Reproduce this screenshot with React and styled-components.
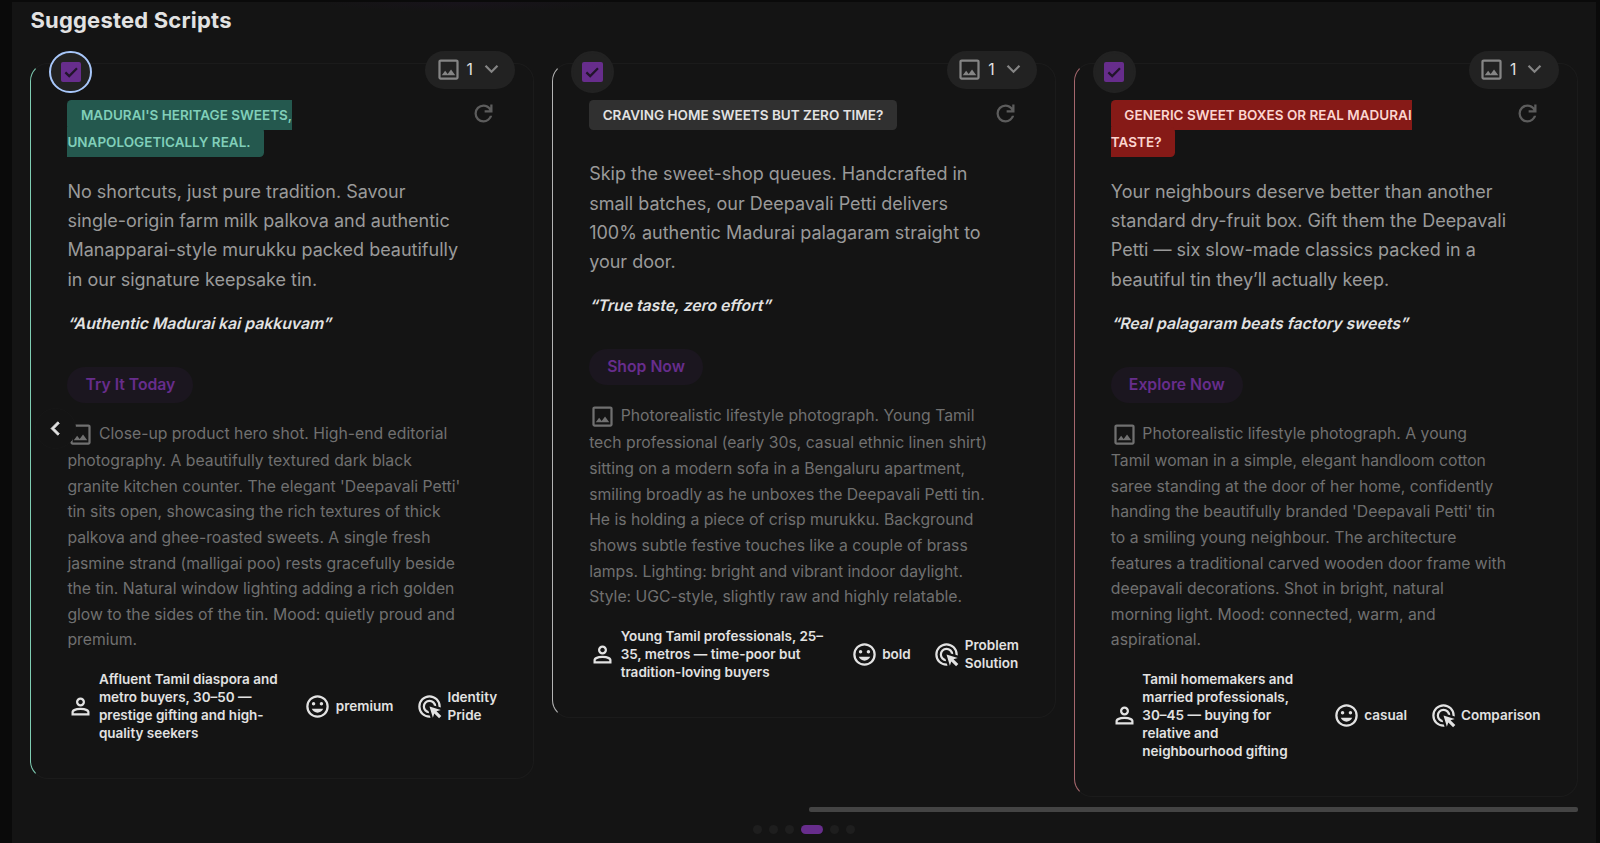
import React, { useState } from "react";
import styled, { createGlobalStyle } from "styled-components";

const icons = {
  image:
    "M200-120q-33 0-56.5-23.5T120-200v-560q0-33 23.5-56.5T200-840h560q33 0 56.5 23.5T840-760v560q0 33-23.5 56.5T760-120H200Zm0-80h560v-560H200v560Zm40-80h480L570-480 450-320l-90-120-120 160Z",
  person:
    "M480-480q-66 0-113-47t-47-113q0-66 47-113t113-47q66 0 113 47t47 113q0 66-47 113t-113 47ZM160-160v-112q0-34 17.5-62.5T224-378q62-31 126-46.5T480-440q66 0 130 15.5T736-378q29 15 46.5 43.5T800-272v112H160Zm80-80h480v-32q0-11-5.5-20T700-306q-54-27-109-40.5T480-360q-56 0-111 13.5T260-306q-9 5-14.5 14t-5.5 20v32Zm240-320q33 0 56.5-23.5T560-640q0-33-23.5-56.5T480-720q-33 0-56.5 23.5T400-640q0 33 23.5 56.5T480-560Z",
  mood:
    "M480-260q68 0 123.5-38.5T684-400H276q25 63 80.5 101.5T480-260Zm140-260q25 0 42.5-17.5T680-580q0-25-17.5-42.5T620-640q-25 0-42.5 17.5T560-580q0 25 17.5 42.5T620-520Zm-280 0q25 0 42.5-17.5T400-580q0-25-17.5-42.5T340-640q-25 0-42.5 17.5T280-580q0 25 17.5 42.5T340-520ZM480-80q-83 0-156-31.5T197-197q-54-54-85.5-127T80-480q0-83 31.5-156T197-763q54-54 127-85.5T480-880q83 0 156 31.5T763-763q54 54 85.5 127T880-480q0 83-31.5 156T763-197q-54 54-127 85.5T480-80Zm0-80q134 0 227-93t93-227q0-134-93-227t-227-93q-134 0-227 93t-93 227q0 134 93 227t227 93Z",
  click:
    "M468-240q-96-5-162-74t-66-166q0-100 70-170t170-70q97 0 166 66t74 162l-84-25q-13-54-56-88.5T480-640q-66 0-113 47t-47 113q0 57 34.5 100t88.5 56l25 84Zm48 158q-9 2-18 2h-18q-83 0-156-31.5T197-197q-54-54-85.5-127T80-480q0-83 31.5-156T197-763q54-54 127-85.5T480-880q83 0 156 31.5T763-763q54 54 85.5 127T880-480v18q0 9-2 18l-78-24v-12q0-134-93-227t-227-93q-134 0-227 93t-93 227q0 134 93 227t227 93h12l24 78Zm305 22L650-231 600-80 480-480l400 120-151 50 171 171-79 79Z",
  refresh:
    "M480-160q-134 0-227-93t-93-227q0-134 93-227t227-93q69 0 132 28.5T720-690v-110h80v280H520v-80h168q-32-56-87.5-88T480-720q-100 0-170 70t-70 170q0 100 70 170t170 70q77 0 139-44t87-116h84q-28 106-114 173t-196 67Z",
  more: "M480-344 240-584l56-56 184 184 184-184 56 56-240 240Z",
  left: "M560-240 320-480l240-240 56 56-184 184 184 184-56 56Z",
};

const scripts = [
  {
    id: 1,
    badge: "MADURAI'S HERITAGE SWEETS, UNAPOLOGETICALLY REAL.",
    line: "#7fcdb3",
    badgeBg: "#24584e",
    badgeText: "#80cfb9",
    body: "No shortcuts, just pure tradition. Savour single-origin farm milk palkova and authentic Manapparai-style murukku packed beautifully in our signature keepsake tin.",
    quote: "“Authentic Madurai kai pakkuvam”",
    cta: "Try It Today",
    visual:
      "Close-up product hero shot. High-end editorial photography. A beautifully textured dark black granite kitchen counter. The elegant 'Deepavali Petti' tin sits open, showcasing the rich textures of thick palkova and ghee-roasted sweets. A single fresh jasmine strand (malligai poo) rests gracefully beside the tin. Natural window lighting adding a rich golden glow to the sides of the tin. Mood: quietly proud and premium.",
    audience:
      "Affluent Tamil diaspora and metro buyers, 30–50 — prestige gifting and high-quality seekers",
    tone: "premium",
    angle: "Identity Pride",
  },
  {
    id: 2,
    badge: "CRAVING HOME SWEETS BUT ZERO TIME?",
    line: "#b4b4b4",
    badgeBg: "#303030",
    badgeText: "#e2e2e2",
    body: "Skip the sweet-shop queues. Handcrafted in small batches, our Deepavali Petti delivers 100% authentic Madurai palagaram straight to your door.",
    quote: "“True taste, zero effort”",
    cta: "Shop Now",
    visual:
      "Photorealistic lifestyle photograph. Young Tamil tech professional (early 30s, casual ethnic linen shirt) sitting on a modern sofa in a Bengaluru apartment, smiling broadly as he unboxes the Deepavali Petti tin. He is holding a piece of crisp murukku. Background shows subtle festive touches like a couple of brass lamps. Lighting: bright and vibrant indoor daylight. Style: UGC-style, slightly raw and highly relatable.",
    audience:
      "Young Tamil professionals, 25–35, metros — time-poor but tradition-loving buyers",
    tone: "bold",
    angle: "Problem Solution",
  },
  {
    id: 3,
    badge: "GENERIC SWEET BOXES OR REAL MADURAI TASTE?",
    line: "#a5676d",
    badgeBg: "#861a17",
    badgeText: "#fbd5d0",
    body: "Your neighbours deserve better than another standard dry-fruit box. Gift them the Deepavali Petti — six slow-made classics packed in a beautiful tin they’ll actually keep.",
    quote: "“Real palagaram beats factory sweets”",
    cta: "Explore Now",
    visual:
      "Photorealistic lifestyle photograph. A young Tamil woman in a simple, elegant handloom cotton saree standing at the door of her home, confidently handing the beautifully branded 'Deepavali Petti' tin to a smiling young neighbour. The architecture features a traditional carved wooden door frame with deepavali decorations. Shot in bright, natural morning light. Mood: connected, warm, and aspirational.",
    audience:
      "Tamil homemakers and married professionals, 30–45 — buying for relative and neighbourhood gifting",
    tone: "casual",
    angle: "Comparison",
  },
];

function Icon({ name }) {
  return (
    <Glyph viewBox="0 -960 960 960">
      <path d={icons[name]} />
    </Glyph>
  );
}

function ScriptCard({ script, focused, checked, onToggle }) {
  return (
    <Card $line={script.line}>
      <CheckCircle $focused={focused} onClick={onToggle}>
        <CheckBox $checked={checked}>
          <svg viewBox="0 0 18 18" fill="none">
            <path
              d="M3.9 9.2 7.3 12.5 14.2 5.6"
              stroke="#21152a"
              strokeWidth="2"
            />
          </svg>
        </CheckBox>
      </CheckCircle>
      <CountPill>
        <Icon name="image" />
        <span>1</span>
        <Icon name="more" />
      </CountPill>

      <CardHeader>
        <BadgeWrap>
          <Badge $bg={script.badgeBg} $color={script.badgeText}>
            {script.badge}
          </Badge>
        </BadgeWrap>
        <Refresh>
          <Icon name="refresh" />
        </Refresh>
      </CardHeader>

      <Body>{script.body}</Body>
      <Quote>{script.quote}</Quote>
      <Cta>{script.cta}</Cta>
      <Visual>
        <Icon name="image" />
        {script.visual}
      </Visual>

      <Meta>
        <MetaItem $grow>
          <Icon name="person" />
          <span>{script.audience}</span>
        </MetaItem>
        <MetaItem>
          <Icon name="mood" />
          <span>{script.tone}</span>
        </MetaItem>
        <MetaItem $narrow>
          <Icon name="click" />
          <span>{script.angle}</span>
        </MetaItem>
      </Meta>
    </Card>
  );
}

function App() {
  const [selected, setSelected] = useState([1, 2, 3]);

  const handleToggle = (id) => {
    if (selected.includes(id)) {
      setSelected(selected.filter((item) => item !== id));
    } else {
      setSelected([...selected, id]);
    }
  };

  return (
    <Page>
      <GlobalStyle />
      <Panel>
        <Title>Suggested Scripts</Title>
        <Cards>
          {scripts.map((script) => (
            <ScriptCard
              key={script.id}
              script={script}
              focused={script.id === 1}
              checked={selected.includes(script.id)}
              onToggle={() => handleToggle(script.id)}
            />
          ))}
        </Cards>
        <ScrollTrack>
          <ScrollThumb />
        </ScrollTrack>
        <Dots>
          {[0, 1, 2, 3, 4, 5].map((dot) => (
            <Dot key={dot} $active={dot === 3} />
          ))}
        </Dots>
        <PrevButton>
          <Icon name="left" />
        </PrevButton>
      </Panel>
    </Page>
  );
}

const GlobalStyle = createGlobalStyle`
  * {
    box-sizing: border-box;
  }
  body {
    margin: 0;
    background: #0a0a0a;
    font-family: Inter, "Liberation Sans", sans-serif;
  }
`;

const Page = styled.div`
  height: 843px;
  overflow: hidden;
  padding: 2px 4.4px 0 12px;
  background: #0a0a0a;
`;

const Panel = styled.div`
  position: relative;
  height: 841px;
  padding: 0 18px 0 18.4px;
  background:
    radial-gradient(ellipse 150px 10px at 455px 0, #18131b, transparent)
      no-repeat,
    #141414;
`;

const Title = styled.h2`
  margin: 0;
  height: 61.3px;
  padding-top: 5px;
  font-size: 22px;
  line-height: 27px;
  font-weight: 700;
  letter-spacing: 0.2px;
  color: #e2e2e2;
`;

const Cards = styled.div`
  display: grid;
  grid-template-columns: repeat(3, minmax(0, 1fr));
  align-items: start;
  gap: 18px;
  height: 743.8px;
`;

const Glyph = styled.svg`
  flex: none;
  width: 27px;
  height: 27px;
  fill: currentColor;
`;

const Card = styled.article`
  position: relative;
  padding: 37px 36px 36px;
  border: 1px solid #1b1b1b;
  border-left-color: ${(props) => props.$line};
  border-radius: 18px;
`;

const CheckCircle = styled.div`
  position: absolute;
  top: -13.8px;
  left: 18px;
  width: 42.75px;
  height: 42.75px;
  display: flex;
  align-items: center;
  justify-content: center;
  border-radius: 50%;
  border: 2.25px solid ${(props) => (props.$focused ? "#a8c7fa" : "#222222")};
  background: #222222;
`;

const CheckBox = styled.div`
  width: 20.25px;
  height: 20.25px;
  border-radius: 2px;
  background: ${(props) => (props.$checked ? "#672d8c" : "transparent")};

  svg {
    display: block;
  }
`;

const CountPill = styled.div`
  position: absolute;
  top: -13.8px;
  right: 18px;
  width: 90px;
  height: 38.25px;
  display: flex;
  align-items: center;
  padding-left: 9.5px;
  gap: 3.6px;
  border-radius: 20px;
  background: #222222;
  color: #858585;
  font-size: 15.75px;

  span {
    width: 9px;
    text-align: center;
    color: #e2e2e2;
  }
`;

const CardHeader = styled.div`
  display: flex;
  justify-content: space-between;
  align-items: flex-start;
  min-height: 36.5px;
  margin-bottom: 21.6px;
`;

const BadgeWrap = styled.div`
  max-width: 345px;
  font-size: 13.5px;
  line-height: 27px;
`;

const Badge = styled.span`
  padding: 6.75px 13.5px 7.4px;
  border-radius: 4.5px;
  font-weight: 600;
  background: ${(props) => props.$bg};
  color: ${(props) => props.$color};
`;

const Refresh = styled.div`
  height: 27px;
  margin-top: -1.5px;
  color: #5c5c5c;
`;

const Body = styled.p`
  margin: 0 0 18.9px;
  max-width: 399px;
  font-size: 18px;
  line-height: 29.2px;
  color: #9a9a9a;
`;

/* slanted upright face, not the true italic */
const Quote = styled.p`
  margin: 0 0 31.8px;
  width: fit-content;
  font-size: 15.75px;
  line-height: 22.5px;
  font-weight: 600;
  transform: skewX(-14deg);
  transform-origin: 0 17px;
  color: #e2e2e2;
`;

const Cta = styled.div`
  width: fit-content;
  height: 36px;
  padding: 0 18px;
  margin-bottom: 18px;
  border-radius: 18px;
  font-size: 15.75px;
  line-height: 36px;
  font-weight: 600;
  background: #1b161f;
  color: #672d8c;
`;

const Visual = styled.p`
  margin: 0 0 17.2px;
  max-width: 398.2px;
  font-size: 15.75px;
  line-height: 25.66px;
  color: #707070;

  svg {
    margin-right: 4.5px;
    vertical-align: -9px;
  }
`;

const Meta = styled.div`
  display: flex;
  align-items: center;
  gap: 22.5px;
`;

const MetaItem = styled.div`
  display: flex;
  align-items: center;
  gap: 4.5px;
  flex: ${(props) => (props.$grow ? "1" : "none")};
  font-size: 13.5px;
  line-height: 18px;
  font-weight: 600;
  color: #e2e2e2;

  span {
    width: ${(props) => (props.$narrow ? "min-content" : "auto")};
  }
`;

const ScrollTrack = styled.div`
  display: flex;
  justify-content: flex-end;
  height: 4.5px;
`;

const ScrollThumb = styled.div`
  width: 769px;
  border-radius: 2px;
  background: #444444;
`;

const Dots = styled.div`
  display: flex;
  justify-content: center;
  gap: 6.75px;
  margin-top: 13.5px;
`;

const Dot = styled.span`
  width: ${(props) => (props.$active ? "22.5px" : "9px")};
  height: 9px;
  border-radius: 5px;
  background: ${(props) => (props.$active ? "#672d8c" : "#1e1e1e")};
`;

const PrevButton = styled.div`
  position: absolute;
  top: 406px;
  left: 22.5px;
  width: 41px;
  height: 41px;
  display: flex;
  align-items: center;
  justify-content: center;
  border-radius: 50%;
  border: 1px solid #171717;
  background: #141414;
  color: #e2e2e2;

  svg {
    width: 27px;
    height: 27px;
    stroke: currentColor;
    stroke-width: 30;
  }
`;

export default App;
